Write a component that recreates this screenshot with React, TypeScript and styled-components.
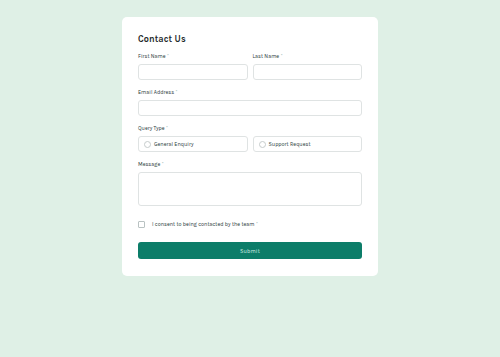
import React from 'react';
import styled, { createGlobalStyle } from 'styled-components';

const GlobalStyle = createGlobalStyle`
	html, body {
		margin: 0;
		padding: 0;
		background: #dff0e6;
	}
	body {
		font-family: 'Karla', 'Inter', 'Liberation Sans', sans-serif;
		color: #2a4244;
	}
`;

const Page = styled.div`
	width: 500px;
	height: 357px;
	display: flex;
	justify-content: center;
	align-items: flex-start;
	padding-top: 17px;
	box-sizing: border-box;
`;

const Card = styled.form`
	width: 256px;
	box-sizing: border-box;
	background: #ffffff;
	border-radius: 5px;
	padding: 16px 16px 17px;
	display: flex;
	flex-direction: column;
`;

const Title = styled.h1`
	margin: 0 0 8px;
	font-size: 9px;
	line-height: 12px;
	font-weight: 700;
	color: #1e2a2a;
	letter-spacing: 0.1px;
`;

const Fields = styled.div`
	display: flex;
	flex-direction: column;
	gap: 9px;
`;

const Row = styled.div`
	display: grid;
	grid-template-columns: 1fr 1fr;
	gap: 5px;
`;

const Field = styled.div`
	display: flex;
	flex-direction: column;
	gap: 4px;
`;

const Label = styled.label`
	display: block;
	height: 7px;
	font-size: 5.5px;
	line-height: 7px;
	color: #2a3b3b;
`;

const Star = styled.span`
	color: #7fa8a0;
	margin-left: 1.5px;
	font-size: 4.5px;
	line-height: 0;
	vertical-align: 1px;
`;

const Input = styled.div<{ $h?: number }>`
	height: ${(p) => p.$h ?? 16}px;
	box-sizing: border-box;
	border: 1px solid #dfe3e3;
	border-radius: 3px;
	background: #fff;
`;

const RadioBox = styled.div`
	height: 16px;
	box-sizing: border-box;
	border: 1px solid #dfe3e3;
	border-radius: 3px;
	display: flex;
	align-items: center;
	gap: 3px;
	padding-left: 5px;
	font-size: 5.5px;
	color: #2a3b3b;
`;

const Circle = styled.span`
	width: 7px;
	height: 7px;
	box-sizing: border-box;
	border: 1px solid #c6cccc;
	border-radius: 50%;
`;

const Consent = styled.div`
	display: flex;
	align-items: center;
	gap: 7px;
	height: 8px;
	margin-top: 14px;
	font-size: 5.5px;
	line-height: 8px;
	color: #2a3b3b;
`;

const Box = styled.span`
	width: 7px;
	height: 7px;
	box-sizing: border-box;
	border: 1px solid #b9c2c2;
	border-radius: 1px;
`;

const Submit = styled.button`
	margin-top: 14px;
	height: 17px;
	border: none;
	border-radius: 3px;
	background: #0c7d69;
	color: #d9efe8;
	font-family: inherit;
	font-size: 5.5px;
	letter-spacing: 0.2px;
	padding: 0;
`;

const Req = ({ children }: { children: React.ReactNode }) => (
	<Label>
		{children}
		<Star>*</Star>
	</Label>
);

const App = () => (
	<>
		<GlobalStyle />
		<Page>
			<Card>
				<Title>Contact Us</Title>
				<Fields>
					<Row>
						<Field>
							<Req>First Name</Req>
							<Input />
						</Field>
						<Field>
							<Req>Last Name</Req>
							<Input />
						</Field>
					</Row>
					<Field>
						<Req>Email Address</Req>
						<Input />
					</Field>
					<Field>
						<Req>Query Type</Req>
						<Row>
							<RadioBox>
								<Circle />
								General Enquiry
							</RadioBox>
							<RadioBox>
								<Circle />
								Support Request
							</RadioBox>
						</Row>
					</Field>
					<Field>
						<Req>Message</Req>
						<Input $h={34} />
					</Field>
				</Fields>
				<Consent>
					<Box />
					<span>
						I consent to being contacted by the team<Star>*</Star>
					</span>
				</Consent>
				<Submit type="button">Submit</Submit>
			</Card>
		</Page>
	</>
);

export default App;
